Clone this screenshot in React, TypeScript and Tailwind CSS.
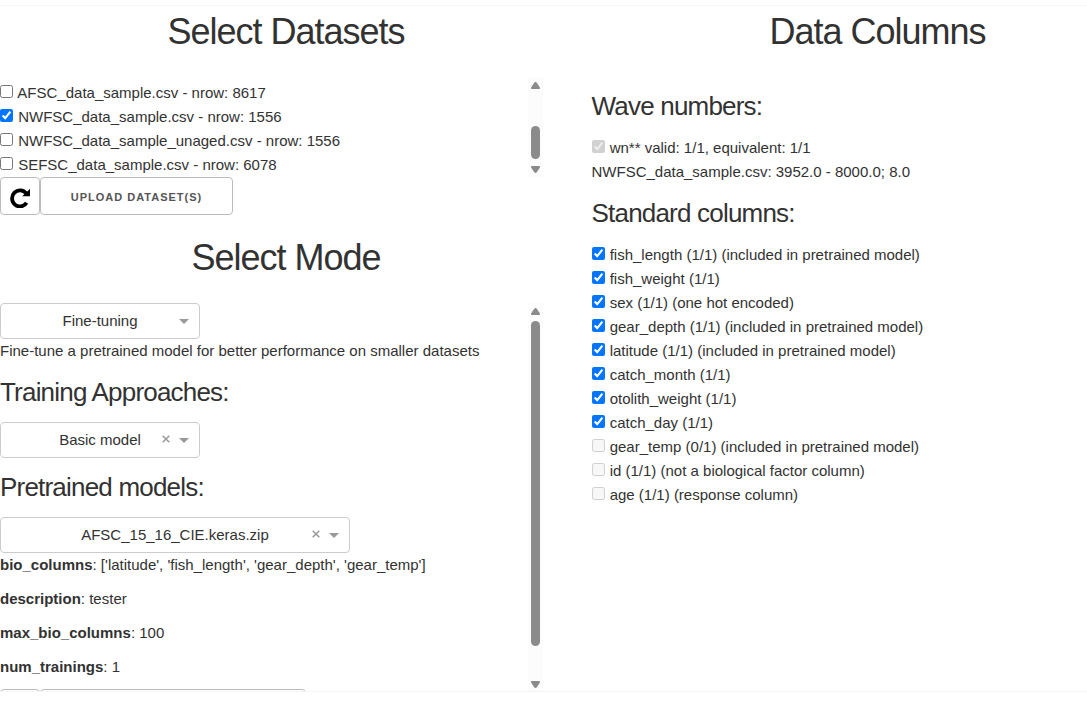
import React from "react";

function Title({ children }: { children: React.ReactNode }) {
  return (
    <h2 className="h-[45px] text-center text-[36px] leading-[45px] tracking-[-1px]">{children}</h2>
  );
}

function Heading({ children }: { children: React.ReactNode }) {
  return (
    <h4 className="my-3 h-[35px] text-[26px] leading-[35px] tracking-[-0.8px]">{children}</h4>
  );
}

function Option({ label, checked = false, disabled = false }: { label: string; checked?: boolean; disabled?: boolean }) {
  return (
    <label className="block h-6 whitespace-nowrap">
      <input className="mr-px" type="checkbox" defaultChecked={checked} disabled={disabled} /> {label}
    </label>
  );
}

function Select({ value, wide = false, clearable = false }: { value: string; wide?: boolean; clearable?: boolean }) {
  return (
    <div
      className={`flex h-9 items-center rounded border border-[#ccc] ${wide ? "w-[350px]" : "w-[200px]"}`}
    >
      <span className={`flex-1 text-center leading-[34px] ${clearable ? "pl-[42px]" : "pl-[25px]"}`}>{value}</span>
      {clearable && (
        <span className="flex w-[17px] justify-center pb-[2px]">
          <svg width="8" height="8" viewBox="0 0 8 8" stroke="#999" strokeWidth="1.5">
            <path d="M.7.7l6.600 6.600M7.300.7L.7 7.300" />
          </svg>
        </span>
      )}
      <span className="flex w-[25px] pl-[5px]">
        <svg width="10" height="5" viewBox="0 0 10 5" fill="#999">
          <path d="M0 0h10L5 5z" />
        </svg>
      </span>
    </div>
  );
}

function Scrollbar({ children }: { children: React.ReactNode }) {
  return (
    <div className="flex w-[15px] shrink-0 flex-col items-center bg-[#fcfcfc] pt-[5px] pb-[4px]">
      <svg width="9" height="7" viewBox="0 0 9 7" fill="#8b8b8b">
        <path d="M4.5 0q.8 0 1.300.8L8.800 5.300Q9.400 7 8.200 7H.8Q-.4 7 .2 5.300L3.200.8q.5-.8 1.300-.8z" />
      </svg>
      {children}
      <svg className="mt-auto" width="9" height="7" viewBox="0 0 9 7" fill="#8b8b8b">
        <path d="M4.500 7q.8 0 1.300-.8L8.800 1.700Q9.400 0 8.200 0H.8Q-.4 0 .2 1.700L3.200 6.200q.5.8 1.300.8z" />
      </svg>
    </div>
  );
}

const datasets = [
  { label: "AFSC_data_sample.csv - nrow: 8617" },
  { label: "NWFSC_data_sample.csv - nrow: 1556", checked: true },
  { label: "NWFSC_data_sample_unaged.csv - nrow: 1556" },
  { label: "SEFSC_data_sample.csv - nrow: 6078" },
];

const details = [
  ["bio_columns", "['latitude', 'fish_length', 'gear_depth', 'gear_temp']"],
  ["description", "tester"],
  ["max_bio_columns", "100"],
  ["num_trainings", "1"],
];

const columns = [
  { label: "fish_length (1/1) (included in pretrained model)", checked: true },
  { label: "fish_weight (1/1)", checked: true },
  { label: "sex (1/1) (one hot encoded)", checked: true },
  { label: "gear_depth (1/1) (included in pretrained model)", checked: true },
  { label: "latitude (1/1) (included in pretrained model)", checked: true },
  { label: "catch_month (1/1)", checked: true },
  { label: "otolith_weight (1/1)", checked: true },
  { label: "catch_day (1/1)", checked: true },
  { label: "gear_temp (0/1) (included in pretrained model)", disabled: true },
  { label: "id (1/1) (not a biological factor column)", disabled: true },
  { label: "age (1/1) (response column)", disabled: true },
];

export default function App() {
  return (
    <div className="h-[704px] overflow-hidden bg-white font-['Liberation_Sans',Arial,sans-serif] text-[15px] leading-6 text-[#323232]">
      <main className="mt-[5px] flex h-[687px] gap-[19.5px] overflow-hidden border-y border-[#f5f5f5]">
        <section className="w-[572px] shrink-0 pt-[3px]">
          <Title>Select Datasets</Title>
          <div className="mt-[23px] flex h-[100px] w-[543px]">
            <div className="flex-1 pt-1">
              {datasets.map((d) => (
                <Option key={d.label} {...d} />
              ))}
            </div>
            <Scrollbar>
              <div className="mt-[37px] h-[33px] w-[9px] rounded-full bg-[#8b8b8b]" />
            </Scrollbar>
          </div>
          <div className="flex">
            <button className="flex h-[38px] w-10 items-center justify-center rounded border border-[#bbb] pt-1 text-black">
              <svg width="20" height="20" viewBox="0 0 20 20">
                <path d="M16.200 5.400A7.900 8.100 0 1 0 16.600 14.800" fill="none" stroke="currentColor" strokeWidth="3.800" />
                <path d="M20 .8V8.300H12.200z" fill="currentColor" />
              </svg>
            </button>
            <button className="h-[38px] w-[193px] rounded border border-[#bbb] pt-px text-[11px] font-semibold tracking-[1px] text-[#555]">
              UPLOAD DATASET(S)
            </button>
          </div>
          <div className="mt-5">
            <Title>Select Mode</Title>
          </div>
          <div className="mt-[23px] flex h-[389px] w-[543px] overflow-hidden">
            <div className="flex-1">
              <Select value="Fine-tuning" />
              <p>Fine-tune a pretrained model for better performance on smaller datasets</p>
              <Heading>Training Approaches:</Heading>
              <Select value="Basic model" clearable />
              <Heading>Pretrained models:</Heading>
              <Select value="AFSC_15_16_CIE.keras.zip" wide clearable />
              {details.map(([name, value]) => (
                <p key={name} className="mb-2.5">
                  <b>{name}</b>: {value}
                </p>
              ))}
              <div className="flex">
                <div className="h-[38px] w-10 rounded border border-[#bbb]" />
                <div className="h-[38px] w-[266px] rounded border border-[#bbb]" />
              </div>
            </div>
            <Scrollbar>
              <div className="mt-[6px] h-[325px] w-[9px] rounded-full bg-[#8b8b8b]" />
            </Scrollbar>
          </div>
        </section>
        <section className="w-[572px] shrink-0 pt-[3px]">
          <Title>Data Columns</Title>
          <div className="mt-[35px]">
            <Heading>Wave numbers:</Heading>
            <Option label="wn** valid: 1/1, equivalent: 1/1" checked disabled />
            <p>NWFSC_data_sample.csv: 3952.0 - 8000.0; 8.0</p>
            <Heading>Standard columns:</Heading>
            {columns.map((c) => (
              <Option key={c.label} {...c} />
            ))}
          </div>
        </section>
      </main>
    </div>
  );
}
